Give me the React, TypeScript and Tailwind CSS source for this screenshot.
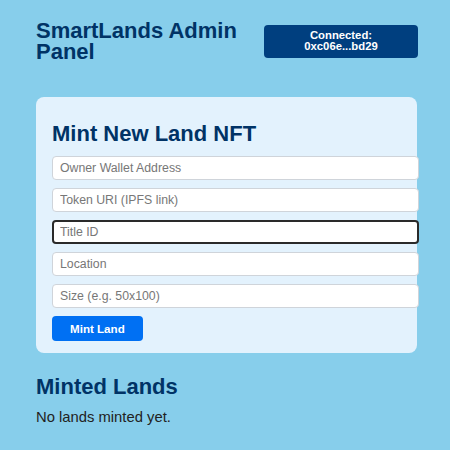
import { useState } from "react";

const fields = [
  { name: "owner", placeholder: "Owner Wallet Address" },
  { name: "tokenURI", placeholder: "Token URI (IPFS link)" },
  { name: "titleId", placeholder: "Title ID" },
  { name: "location", placeholder: "Location" },
  { name: "size", placeholder: "Size (e.g. 50x100)" },
];

export default function App() {
  const [form, setForm] = useState<Record<string, string>>({});
  const [lands] = useState<string[]>([]);

  return (
    <div className="min-h-screen bg-[#87ceeb] font-['Liberation_Sans',Arial,sans-serif] pt-[20px]">
      <div className="ml-[36px] w-[382px]">
        <header className="flex items-center justify-between">
          <h1 className="flex-1 text-[22px] leading-[21px] font-bold text-[#003366]">
            SmartLands Admin Panel
          </h1>
          <button className="flex h-[33px] w-[154px] flex-col items-center justify-center rounded-[4px] bg-[#003f7f] text-[11.3px] leading-[11.5px] font-bold text-white">
            <span>Connected:</span>
            <span>0xc06e...bd29</span>
          </button>
        </header>

        <section className="mt-[35px] w-[381px] rounded-[8px] bg-[#e3f2fd] px-[16px] pt-[26px] pb-[12px]">
          <h2 className="mb-[12px] text-[22px] leading-[21px] font-bold text-[#003366]">
            Mint New Land NFT
          </h2>
          <div className="flex flex-col gap-2">
            {fields.map((f) => (
              <input
                key={f.name}
                autoFocus={f.name === "titleId"}
                value={form[f.name] || ""}
                onChange={(e) => setForm({ ...form, [f.name]: e.target.value })}
                placeholder={f.placeholder}
                className={`box-border h-[24px] w-[367px] rounded-[4px] bg-white text-[12.3px] text-[#222] placeholder:text-[#777] focus:outline-none ${
                  f.name === "titleId"
                    ? "border-2 border-[#2a2a2a] pl-[6px]"
                    : "border border-[#cfd4da] pl-[7px]"
                }`}
              />
            ))}
            <button className="h-[25px] self-start rounded-[4px] bg-[#0070f3] px-[18px] text-[11.6px] font-bold text-white">
              Mint Land
            </button>
          </div>
        </section>

        <h2 className="mt-[23px] text-[22px] leading-[21px] font-bold text-[#003366]">
          Minted Lands
        </h2>
        {lands.length === 0 ? (
          <p className="mt-[12px] text-[14.8px] leading-[17px] text-[#222]">
            No lands minted yet.
          </p>
        ) : (
          <ul>
            {lands.map((l) => (
              <li key={l}>{l}</li>
            ))}
          </ul>
        )}
      </div>
    </div>
  );
}
